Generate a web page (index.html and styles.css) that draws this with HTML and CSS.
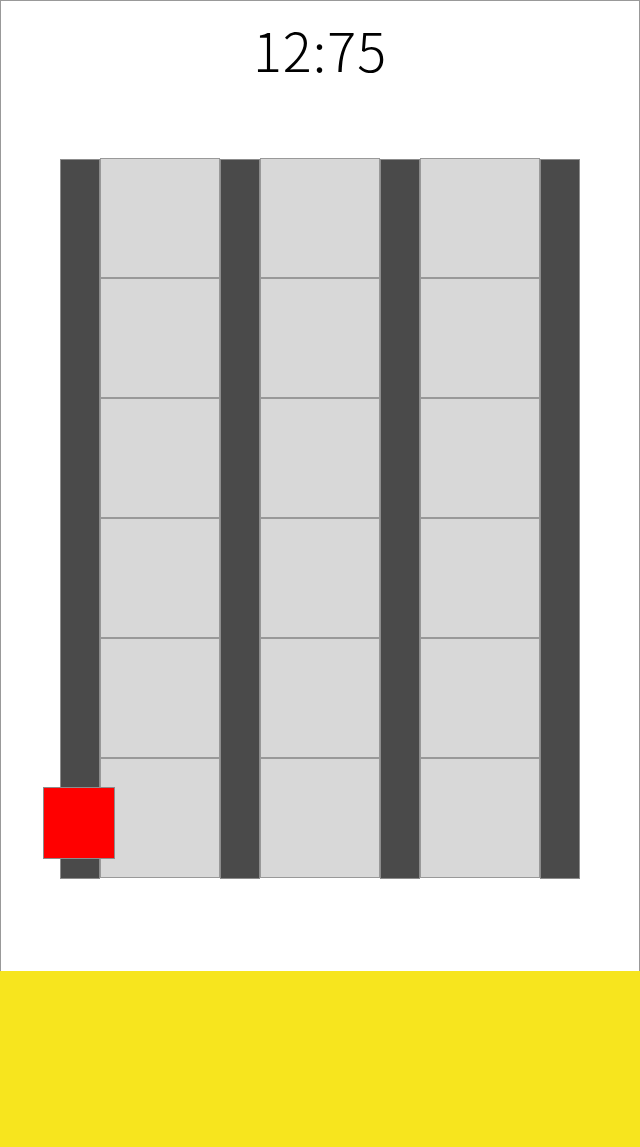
FILE: index.html
```html
<!DOCTYPE html>
<html lang="ja">
<head>
    <meta charset="UTF-8">
    <meta name="viewport" content="width=device-width, initial-scale=1.0">
    <title>12:75</title>
    <link rel="stylesheet" href="styles.css">
</head>
<body>
    <div class="screen">
        <div class="clock">12:75</div>
        <div class="board">
            <div class="rail"></div>
            <div class="lane">
                <div class="cell"></div><div class="cell"></div><div class="cell"></div>
                <div class="cell"></div><div class="cell"></div><div class="cell"></div>
            </div>
            <div class="rail"></div>
            <div class="lane">
                <div class="cell"></div><div class="cell"></div><div class="cell"></div>
                <div class="cell"></div><div class="cell"></div><div class="cell"></div>
            </div>
            <div class="rail"></div>
            <div class="lane">
                <div class="cell"></div><div class="cell"></div><div class="cell"></div>
                <div class="cell"></div><div class="cell"></div><div class="cell"></div>
            </div>
            <div class="rail"></div>
            <div class="piece"></div>
        </div>
    </div>
    <div class="footer"></div>
</body>
</html>
```

FILE: styles.css
```css
* {
    margin: 0;
    padding: 0;
    box-sizing: border-box;
}
body {
    font-family: "Noto Sans CJK JP", "Noto Sans", sans-serif;
    background-color: #ffffff;
    color: #000000;
}
.screen {
    height: 971px;
    border: 1px solid #999999;
    border-bottom: none;
}
.clock {
    height: 157px;
    padding-top: 21px;
    font-size: 54px;
    line-height: 54px;
    font-weight: 300;
    letter-spacing: 1px;
    text-align: center;
}
.board {
    position: relative;
    display: flex;
    margin-left: 59px;
}
.rail {
    width: 40px;
    height: 720px;
    margin-top: 1px;
    background-color: #4a4a4a;
    border: 1px solid #8c8c8c;
}
.lane {
    display: flex;
    flex-direction: column;
    width: 120px;
}
.cell {
    width: 120px;
    height: 120px;
    background-color: #d8d8d8;
    border: 1px solid #999999;
}
.piece {
    position: absolute;
    left: -17px;
    top: 629px;
    width: 72px;
    height: 72px;
    background-color: #ff0000;
    border: 1px solid #8c8c8c;
}
.footer {
    height: 176px;
    background-color: #f7e51e;
}
```
